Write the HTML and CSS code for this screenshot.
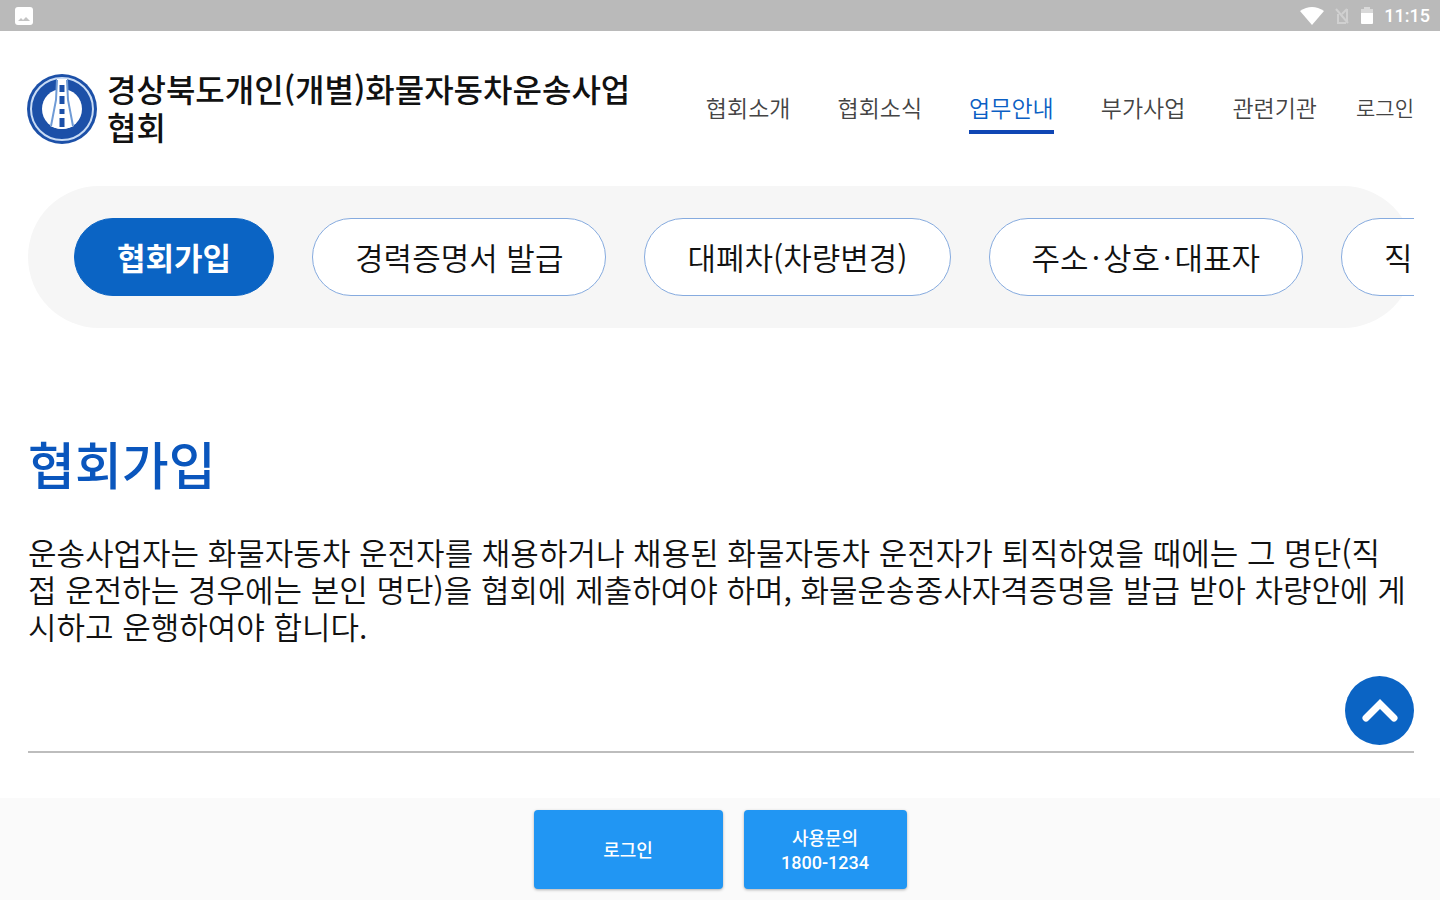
FILE: index.html
```html
<!DOCTYPE html>
<html lang="ko">
<head>
    <meta charset="UTF-8">
    <meta name="viewport" content="width=device-width, initial-scale=1.0">
    <title>경상북도개인(개별)화물자동차운송사업협회</title>
    <link rel="stylesheet" href="styles.css">
</head>
<body>
    <div class="status-bar">
        <svg class="status-photo" width="20" height="20" viewBox="0 0 20 20" aria-hidden="true">
            <rect x="1" y="1" width="18" height="18" rx="3" fill="#fff"/>
            <path d="M4 15l3-3 2 2 3-3 4 4z" fill="#c4c4c4"/>
        </svg>
        <div class="status-right">
            <svg width="24" height="18" viewBox="0 0 24 18" aria-hidden="true">
                <path d="M0 4Q12-4 24 4L12 18z" fill="#fff"/>
            </svg>
            <svg width="16" height="18" viewBox="0 0 16 18" aria-hidden="true">
                <path d="M2 2l12 14M13 2v12M13 2L8 7M4 7v9h8" fill="none" stroke="#d0d0d0" stroke-width="2"/>
            </svg>
            <svg width="14" height="18" viewBox="0 0 14 18" aria-hidden="true">
                <path d="M4 0h6v2h3v5H1V2h3z" fill="#d9d9d9"/>
                <path d="M1 6h12v10a1 1 0 0 1-1 1H2a1 1 0 0 1-1-1z" fill="#fff"/>
            </svg>
            <span class="clock">11:15</span>
        </div>
    </div>

    <header class="header">
        <a class="brand" href="#">
            <svg class="logo" viewBox="0 0 70 70" aria-hidden="true">
                <circle cx="35" cy="35" r="35" fill="#1c50a8"/>
                <circle cx="35" cy="35" r="31" fill="none" stroke="#c9dcf5" stroke-width="2"/>
                <circle cx="35" cy="35" r="20" fill="#fff"/>
                <path d="M30 5h10l2 22 5 25q-12 6-24 0l5-25z" fill="#fff"/>
                <path d="M30 6l-1 20-5 26M40 6l1 20 5 26" fill="none" stroke="#6f9bd6" stroke-width="2"/>
                <path d="M35 11v7M35 22v8M35 35v5M35 44v9" stroke="#1c50a8" stroke-width="5"/>
            </svg>
            <span class="brand-name">경상북도개인(개별)화물자동차운송사업협회</span>
        </a>
        <nav class="nav">
            <a href="#">협회소개</a>
            <a href="#">협회소식</a>
            <a class="active" href="#">업무안내</a>
            <a href="#">부가사업</a>
            <a href="#">관련기관</a>
            <a class="login" href="#">로그인</a>
        </nav>
    </header>

    <main class="content">
        <div class="tabs-wrap">
            <div class="tabs">
                <a class="tab selected" href="#">협회가입</a>
                <a class="tab" href="#">경력증명서 발급</a>
                <a class="tab" href="#">대폐차(차량변경)</a>
                <a class="tab" href="#">주소<span class="dot">·</span>상호<span class="dot">·</span>대표자</a>
                <a class="tab" href="#">직·</a>
            </div>
        </div>

        <section class="join">
            <h1>협회가입</h1>
            <p>운송사업자는 화물자동차 운전자를 채용하거나 채용된 화물자동차 운전자가 퇴직하였을 때에는 그 명단(직접 운전하는 경우에는 본인 명단)을 협회에 제출하여야 하며, 화물운송종사자격증명을 발급 받아 차량안에 게시하고 운행하여야 합니다.</p>
        </section>
    </main>

    <button class="to-top" type="button" aria-label="위로">
        <svg width="36" height="26" viewBox="0 0 36 26" aria-hidden="true">
            <path d="M4 20L18 6l14 14" fill="none" stroke="#fff" stroke-width="7" stroke-linecap="round" stroke-linejoin="miter"/>
        </svg>
    </button>

    <footer class="bottom-bar">
        <button class="login-btn" type="button">로그인</button>
        <button class="call-btn" type="button">사용문의<br>1800-1234</button>
    </footer>
</body>
</html>
```

FILE: styles.css
```css
* {
    box-sizing: border-box;
}
body {
    font-family: 'Noto Sans CJK KR', sans-serif;
    background-color: #fff;
    color: #111;
    margin: 0;
    min-height: 100vh;
    display: flex;
    flex-direction: column;
}
a {
    color: inherit;
    text-decoration: none;
}
.status-bar {
    display: flex;
    justify-content: space-between;
    align-items: center;
    height: 31px;
    padding: 0 10px 0 14px;
    background-color: #bababa;
}
.status-right {
    display: flex;
    align-items: center;
    gap: 10px;
}
.clock {
    font-family: Roboto, sans-serif;
    font-size: 18px;
    font-weight: 500;
    color: #fff;
}
.header {
    display: flex;
    justify-content: space-between;
    align-items: center;
    gap: 64px;
    padding: 38px 26px 0 27px;
}
.brand {
    display: flex;
    align-items: center;
    gap: 10px;
    flex: 1;
}
.logo {
    width: 70px;
    height: 70px;
    flex-shrink: 0;
}
.brand-name {
    padding-bottom: 4px;
    font-size: 32px;
    font-weight: 500;
    line-height: 38px;
    word-break: break-all;
}
.nav {
    display: flex;
    align-items: center;
    gap: 47px;
    font-size: 23px;
    font-weight: 350;
    line-height: 34px;
    color: #444;
    white-space: nowrap;
}
.nav a {
    padding: 6px 0;
    border-bottom: 4px solid transparent;
}
.nav .active {
    color: #0b5fc4;
    border-color: #0f46b4;
}
.nav .login {
    font-size: 21px;
    margin-left: -8px;
}
.content {
    flex: 1;
    padding: 37px 26px 44px 28px;
}
.tabs-wrap {
    background-color: #f6f6f6;
    border-radius: 71px;
}
.tabs {
    display: flex;
    gap: 38px;
    padding: 32px 46px;
    overflow: hidden;
}
.tab {
    flex-shrink: 0;
    padding: 15px 42px;
    border: 1px solid #86abdf;
    border-radius: 39px;
    background-color: #fff;
    font-size: 31px;
    font-weight: 350;
    line-height: 46px;
    white-space: nowrap;
}
.tab.selected {
    background-color: #0b64c4;
    border-color: #0b64c4;
    color: #fff;
    font-weight: 700;
}
.dot {
    margin: 0 3px;
}
.join {
    padding: 97px 0 107px;
    border-bottom: 2px solid #bdbdbd;
}
.join h1 {
    margin: 0 0 32px;
    font-size: 51px;
    font-weight: 500;
    line-height: 76px;
    color: #0a56bd;
}
.join p {
    margin: 0;
    padding-right: 8px;
    font-size: 31px;
    font-weight: 350;
    line-height: 37px;
    word-break: break-all;
}
.to-top {
    position: fixed;
    right: 26px;
    bottom: 155px;
    display: flex;
    align-items: center;
    justify-content: center;
    width: 69px;
    height: 69px;
    padding: 0;
    border: none;
    border-radius: 50%;
    background-color: #0b64c4;
    cursor: pointer;
}
.bottom-bar {
    display: flex;
    justify-content: center;
    gap: 21px;
    padding: 12px 0 11px;
    background-color: #fafafa;
}
.bottom-bar button {
    height: 79px;
    padding: 3px 0 0;
    border: none;
    border-radius: 4px;
    background-color: #2196f3;
    box-shadow: 0 1px 3px rgba(0, 0, 0, 0.3);
    color: #fff;
    font-family: Roboto, 'Noto Sans CJK KR', sans-serif;
    font-size: 18px;
    font-weight: 500;
    line-height: 24px;
    cursor: pointer;
}
.bottom-bar .login-btn {
    width: 189px;
}
.bottom-bar .call-btn {
    width: 163px;
}
```
